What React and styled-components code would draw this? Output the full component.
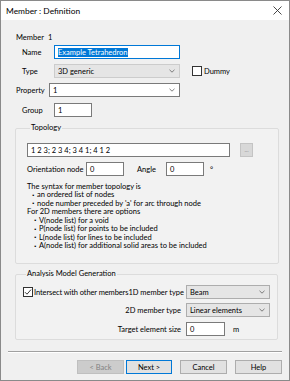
import React from 'react';
import styled, { createGlobalStyle } from 'styled-components';

const Global = createGlobalStyle`
	html, body {
		margin: 0;
		padding: 0;
		background: #ffffff;
	}
	* {
		box-sizing: border-box;
	}
`;

const Window = styled.div`
	width: 290px;
	height: 381px;
	border: 1px solid #8a8a8a;
	background: #f0f0f0;
	font-family: 'Lato', 'Noto Sans', sans-serif;
	font-size: 7.5px;
	color: #000;
	display: flex;
	flex-direction: column;
	overflow: hidden;
`;

const TitleBar = styled.div`
	height: 19px;
	flex-shrink: 0;
	background: #ffffff;
	display: flex;
	align-items: center;
	justify-content: space-between;
	padding: 0 7px 0 5px;
	font-size: 8.4px;
`;

const Body = styled.div`
	flex: 1;
	padding: 13px 13px 0 13px;
	display: flex;
	flex-direction: column;
`;

const MemberLine = styled.div`
	height: 10px;
	line-height: 10px;
	padding-left: 2px;
	display: flex;
	gap: 4px;
	margin-bottom: 2px;
`;

const Row = styled.div`
	display: flex;
	align-items: center;
	height: 14px;
	flex-shrink: 0;
	margin-top: ${(p) => p.$top || 0}px;
`;

const Label = styled.span`
	width: ${(p) => p.$w}px;
	padding-left: ${(p) => p.$pad || 0}px;
	white-space: nowrap;
	flex-shrink: 0;
`;

const Input = styled.div`
	width: ${(p) => p.$w}px;
	height: 14px;
	border: 1px solid ${(p) => (p.$focus ? '#0078d7' : '#7a7a7a')};
	background: #fff;
	display: flex;
	align-items: center;
	padding-left: 3px;
	flex-shrink: 0;
`;

const Selected = styled.span`
	background: #0078d7;
	color: #fff;
	line-height: 9px;
`;

const Select = styled.div`
	width: ${(p) => p.$w}px;
	height: 14px;
	border: 1px solid ${(p) => (p.$look === 'white' ? '#7a7a7a' : p.$look === 'disabled' ? '#cccccc' : '#adadad')};
	background: ${(p) => (p.$look === 'white' ? '#ffffff' : '#e5e5e5')};
	display: flex;
	align-items: center;
	justify-content: space-between;
	padding: 0 4px 0 3px;
	flex-shrink: 0;
`;

const Chevron = () => (
	<svg width="6" height="4" viewBox="0 0 6 4">
		<path d="M0.5 0.8 L3 3.2 L5.5 0.8" fill="none" stroke="#606060" strokeWidth="0.8" />
	</svg>
);

const CheckBox = styled.span`
	width: 10px;
	height: 10px;
	border: 1px solid #333;
	background: #fff;
	display: inline-flex;
	align-items: center;
	justify-content: center;
	margin-left: ${(p) => p.$ml || 0}px;
	margin-right: ${(p) => p.$mr || 2}px;
	flex-shrink: 0;
`;

const Check = () => (
	<svg width="8" height="8" viewBox="0 0 8 8">
		<path d="M1 4.2 L3 6.2 L7 1.6" fill="none" stroke="#222" strokeWidth="0.9" />
	</svg>
);

const Group = styled.fieldset`
	margin: ${(p) => p.$top}px 0 0 1px;
	width: 263px;
	border: 1px solid #dcdcdc;
	border-radius: 2px;
	padding: ${(p) => p.$pad};
	background: #f2f2f2;
	flex-shrink: 0;
`;

const Legend = styled.legend`
	padding: 0 1px;
	margin-left: 3px;
	line-height: 10px;
	height: 10px;
`;

const SmallBtn = styled.div`
	width: 13px;
	height: 14px;
	margin-left: 10px;
	border: 1px solid #c4c4c4;
	background: #d8d8d8;
	color: #8a8a8a;
	display: flex;
	align-items: center;
	justify-content: center;
	font-size: 6px;
	line-height: 6px;
`;

const Syntax = styled.div`
	margin-top: 6px;
	display: grid;
	grid-auto-rows: 8.5px;
`;

const Line = styled.div`
	display: flex;
	align-items: center;
	white-space: nowrap;
	padding-left: ${(p) => (p.$bullet ? (p.$deep ? 7 : 5) : 0)}px;
	&::before {
		content: '${(p) => (p.$bullet ? '▪' : '')}';
		width: ${(p) => (p.$bullet ? 5 : 0)}px;
		font-size: 5px;
	}
`;

const GenRow = styled.div`
	display: flex;
	align-items: center;
	height: 14px;
	margin-top: ${(p) => p.$top || 0}px;
`;

const Left = styled.div`
	width: 163px;
	display: flex;
	align-items: center;
	justify-content: space-between;
	padding-right: 5px;
	white-space: nowrap;
`;

const CheckLabel = styled.span`
	display: flex;
	align-items: center;
	letter-spacing: -0.1px;
`;

const RightLabel = styled.span`
	margin-left: auto;
`;

const Separator = styled.div`
	margin: 11px -6px 0 -6px;
	height: 2px;
	flex-shrink: 0;
	border-top: 1px solid #a0a0a0;
	border-bottom: 1px solid #ffffff;
`;

const Footer = styled.div`
	display: flex;
	justify-content: flex-end;
	margin: 7px -6px 0 0;
`;

const Button = styled.div`
	width: ${(p) => p.$w || 47}px;
	height: 14px;
	margin-left: ${(p) => p.$gap || 0}px;
	border: 1px solid ${(p) => (p.$primary ? '#0078d7' : p.$disabled ? '#bfbfbf' : '#adadad')};
	background: ${(p) => (p.$disabled ? '#cccccc' : '#e1e1e1')};
	color: ${(p) => (p.$disabled ? '#838383' : '#000')};
	display: flex;
	align-items: center;
	justify-content: center;
`;

const Close = () => (
	<svg width="9" height="9" viewBox="0 0 9 9">
		<path d="M0.5 0.5 L8.5 8.5 M8.5 0.5 L0.5 8.5" stroke="#333" strokeWidth="0.9" />
	</svg>
);

export default function App() {
	return (
		<>
			<Global />
			<Window>
				<TitleBar>
					<span>Member : Definition</span>
					<Close />
				</TitleBar>
				<Body>
					<MemberLine>
						<span>Member</span>
						<span>1</span>
					</MemberLine>
					<Row>
						<Label $w={40} $pad={8}>Name</Label>
						<Input $w={126} $focus>
							<Selected>Example Tetrahedron</Selected>
						</Input>
					</Row>
					<Row $top={5}>
						<Label $w={40} $pad={8}>Type</Label>
						<Select $w={126} $look="disabled">
							<span>3D generic</span>
							<Chevron />
						</Select>
						<CheckBox $ml={12} $mr={2} />
						<span>Dummy</span>
					</Row>
					<Row $top={5}>
						<Label $w={35} $pad={2}>Property</Label>
						<Select $w={131} $look="white">
							<span>1</span>
							<Chevron />
						</Select>
					</Row>
					<Row $top={6}>
						<Label $w={40} $pad={8}>Group</Label>
						<Input $w={38}>1</Input>
					</Row>
					<Group $top={6} $pad="10px 25px 13px 11px">
						<Legend>Topology</Legend>
						<Row>
							<Input $w={203}>1 2 3; 2 3 4; 3 4 1; 4 1 2</Input>
							<SmallBtn>...</SmallBtn>
						</Row>
						<Row $top={5}>
							<Label $w={59}>Orientation node</Label>
							<Input $w={38}>0</Input>
							<Label $w={42} $pad={13}>Angle</Label>
							<Input $w={38}>0</Input>
							<Label $w={10} $pad={6}>°</Label>
						</Row>
						<Syntax>
							<Line>The syntax for member topology is</Line>
							<Line $bullet>an ordered list of nodes</Line>
							<Line $bullet>node number preceded by 'a' for arc through node</Line>
							<Line>For 2D members there are options</Line>
							<Line $bullet $deep>V(node list) for a void</Line>
							<Line $bullet $deep>P(node list) for points to be included</Line>
							<Line $bullet $deep>L(node list) for lines to be included</Line>
							<Line $bullet $deep>A(node list) for additional solid areas to be included</Line>
						</Syntax>
					</Group>
					<Group $top={5} $pad="6px 6px 3px 7px">
						<Legend>Analysis Model Generation</Legend>
						<GenRow>
							<Left>
								<CheckLabel>
									<CheckBox $mr={1}>
										<Check />
									</CheckBox>
									Intersect with other members
								</CheckLabel>
								<span>1D member type</span>
							</Left>
							<Select $w={84}>
								<span>Beam</span>
								<Chevron />
							</Select>
						</GenRow>
						<GenRow $top={4}>
							<Left>
								<RightLabel>2D member type</RightLabel>
							</Left>
							<Select $w={84}>
								<span>Linear elements</span>
								<Chevron />
							</Select>
						</GenRow>
						<GenRow $top={5}>
							<Left>
								<RightLabel>Target element size</RightLabel>
							</Left>
							<Input $w={39}>0</Input>
							<Label $w={14} $pad={8}>m</Label>
						</GenRow>
					</Group>
					<Separator />
					<Footer>
						<Button $disabled>&lt; Back</Button>
						<Button $primary $gap={2} $w={46}>Next &gt;</Button>
						<Button $gap={8}>Cancel</Button>
						<Button $gap={8}>Help</Button>
					</Footer>
				</Body>
			</Window>
		</>
	);
}
